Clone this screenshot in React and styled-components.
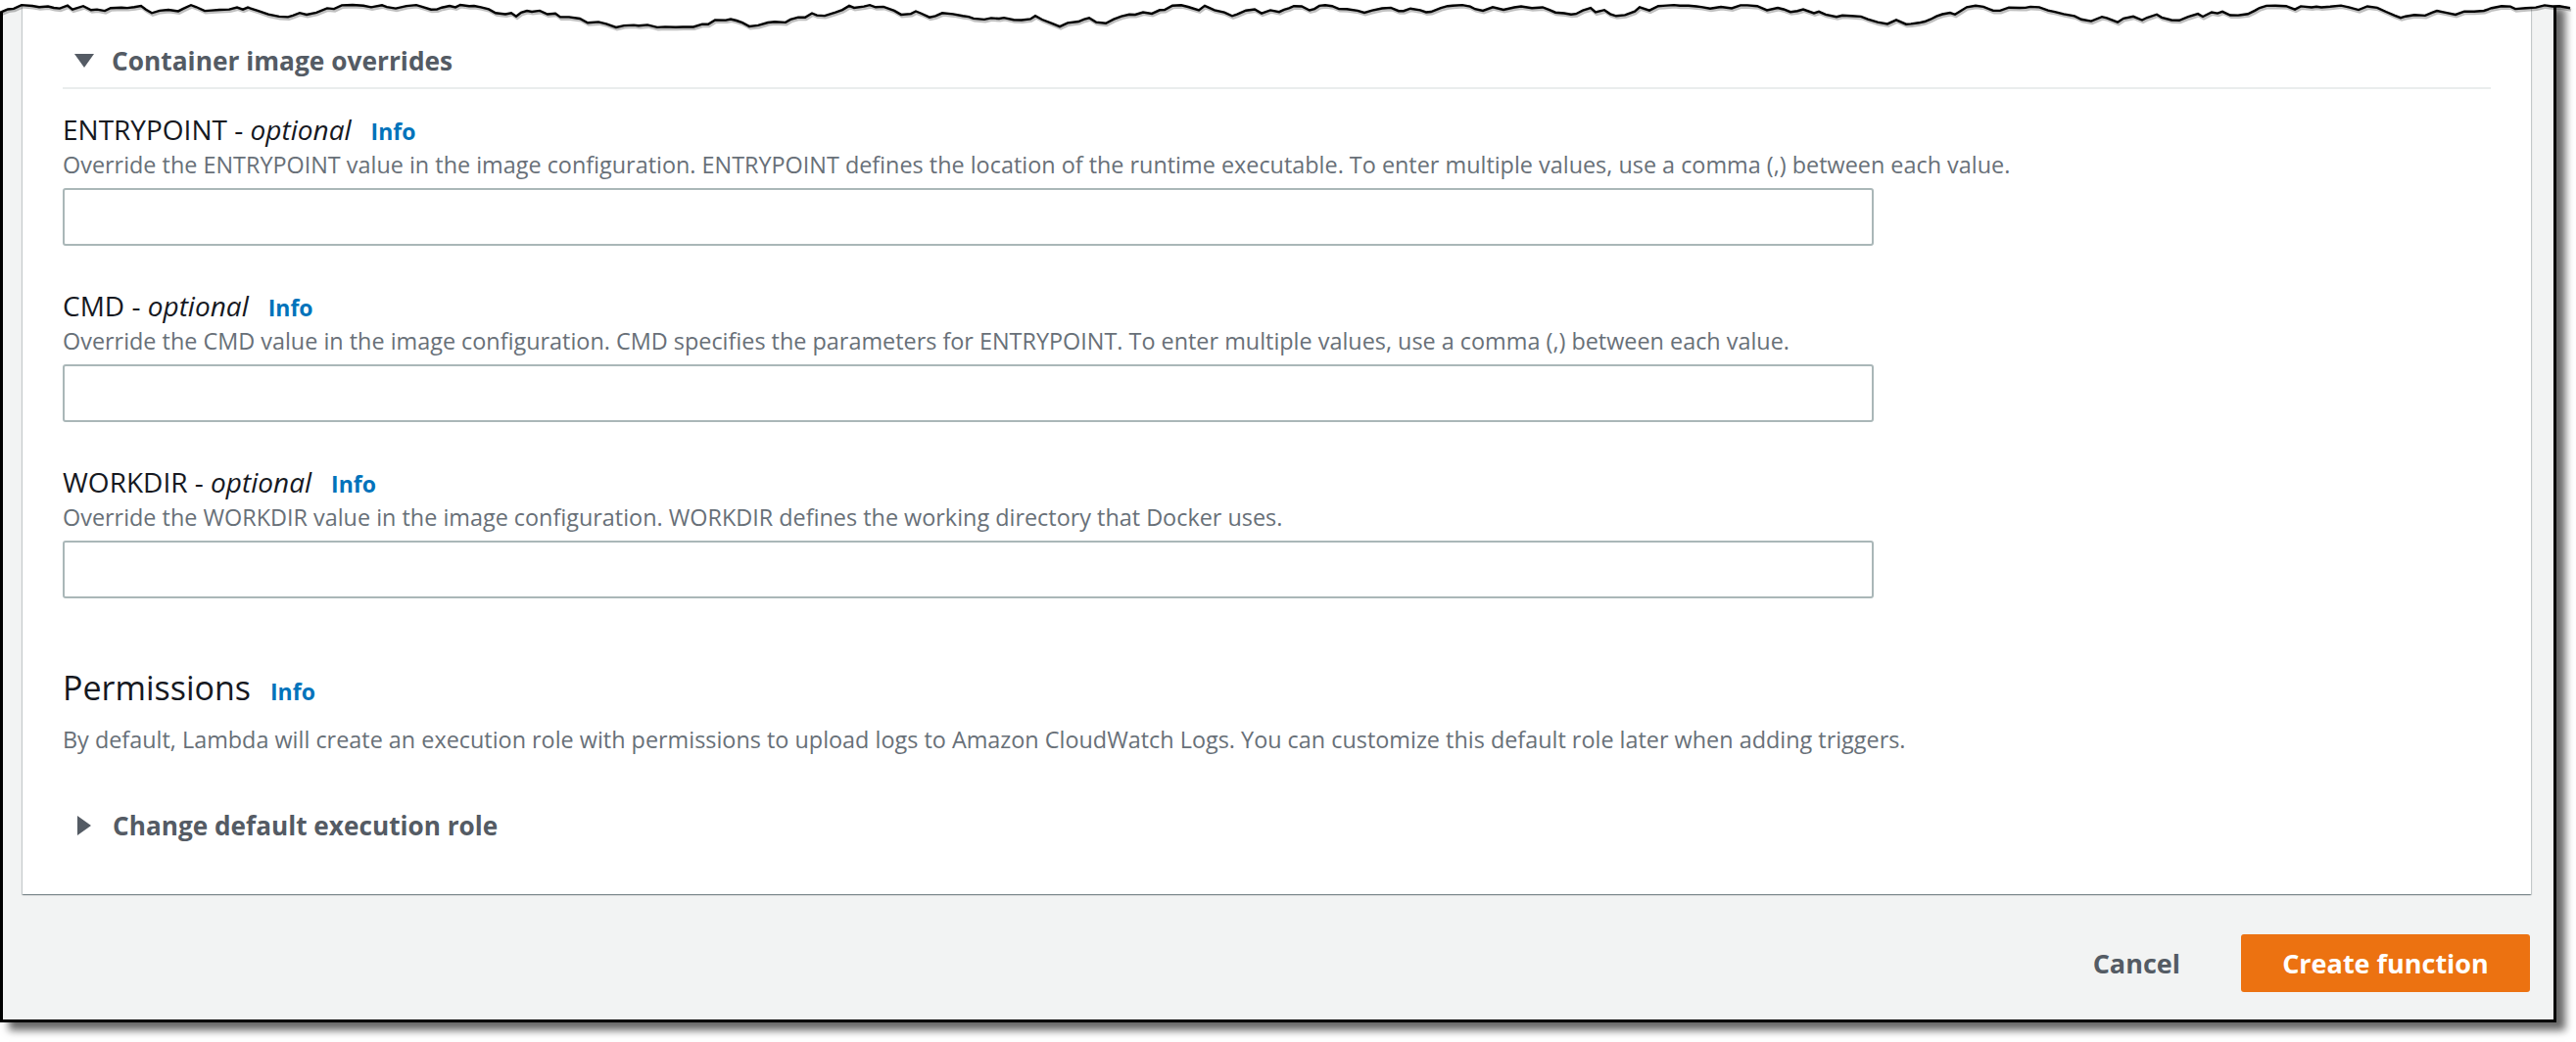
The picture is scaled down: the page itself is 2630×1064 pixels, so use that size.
import styled, { createGlobalStyle } from "styled-components";

const GlobalStyle = createGlobalStyle`
  html, body {
    margin: 0;
    padding: 0;
    background: #fff;
  }
  body {
    font-family: "Open Sans", "Noto Sans", Arial, sans-serif;
    color: #16191f;
  }
`;

// jagged top edge of the cut screenshot
function tearPoints() {
  let seed = 7;
  const rand = () => {
    seed = (seed * 9301 + 49297) % 233280;
    return seed / 233280;
  };
  const pts = [];
  let y = 13;
  for (let x = 0; x <= 2630; x += 5 + Math.floor(rand() * 7)) {
    y += (rand() - 0.5) * 9;
    if (y < 5) y = 5 + rand() * 3;
    if (y > 28) y = 28 - rand() * 3;
    pts.push([x, Math.round(y * 10) / 10]);
  }
  return pts;
}

function Tear() {
  const pts = tearPoints();
  const line = pts.map((p) => p.join(",")).join(" ");
  const last = pts[pts.length - 1];
  const fill = `0,0 ${line} 2630,${last[1]} 2630,0`;
  return (
    <TearSvg width="2630" height="40" viewBox="0 0 2630 40">
      <polygon points={fill} fill="#fff" />
      <polyline points={line} fill="none" stroke="rgba(0,0,0,0.25)" strokeWidth="3" transform="translate(1,2)" />
      <polyline points={line} fill="none" stroke="#000" strokeWidth="2.4" strokeLinejoin="miter" />
    </TearSvg>
  );
}

const CaretDown = () => (
  <svg width="20" height="16" viewBox="0 0 20 16">
    <polygon points="0,1 20,1 10,15" fill="#545b64" />
  </svg>
);

const CaretRight = () => (
  <svg width="16" height="20" viewBox="0 0 16 20">
    <polygon points="1,0 15,10 1,20" fill="#545b64" />
  </svg>
);

const fields = [
  {
    name: "ENTRYPOINT",
    desc: "Override the ENTRYPOINT value in the image configuration. ENTRYPOINT defines the location of the runtime executable. To enter multiple values, use a comma (,) between each value.",
  },
  {
    name: "CMD",
    desc: "Override the CMD value in the image configuration. CMD specifies the parameters for ENTRYPOINT. To enter multiple values, use a comma (,) between each value.",
  },
  {
    name: "WORKDIR",
    desc: "Override the WORKDIR value in the image configuration. WORKDIR defines the working directory that Docker uses.",
  },
];

export default function App() {
  return (
    <Page>
      <GlobalStyle />
      <Frame>
        <Tear />
        <Card>
          <SectionHeader>
            <CaretDown />
            <span>Container image overrides</span>
          </SectionHeader>
          {fields.map((f) => (
            <Field key={f.name}>
              <Label>
                {f.name} - <em>optional</em>
                <Info>Info</Info>
              </Label>
              <Desc>{f.desc}</Desc>
              <Input type="text" />
            </Field>
          ))}
          <Heading>
            Permissions
            <Info>Info</Info>
          </Heading>
          <PermDesc>
            By default, Lambda will create an execution role with permissions to upload logs to Amazon CloudWatch Logs. You can customize this default role later when adding triggers.
          </PermDesc>
          <Expander>
            <CaretRight />
            <span>Change default execution role</span>
          </Expander>
        </Card>
        <Footer>
          <LinkButton>Cancel</LinkButton>
          <PrimaryButton>Create function</PrimaryButton>
        </Footer>
      </Frame>
    </Page>
  );
}

const Page = styled.div`
  width: 2630px;
  height: 1064px;
  background: #fff;
  overflow: hidden;
`;

const Frame = styled.div`
  position: relative;
  box-sizing: border-box;
  width: 2610px;
  height: 1044px;
  border: 3px solid #000;
  border-top: none;
  background: #f2f3f3;
  padding: 0 23px 0 20px;
  box-shadow: 9px 8px 8px rgba(0, 0, 0, 0.6);
  display: flex;
  flex-direction: column;
`;

const TearSvg = styled.svg`
  position: absolute;
  top: 0;
  left: -3px;
  z-index: 2;
`;

const Card = styled.div`
  box-sizing: border-box;
  height: 913px;
  background: #fff;
  padding: 40px 41px 0;
  box-shadow: 0 1px 1px 0 rgba(0, 28, 36, 0.3), 1px 1px 1px 0 rgba(0, 28, 36, 0.15),
    -1px 1px 1px 0 rgba(0, 28, 36, 0.15);
`;

const SectionHeader = styled.div`
  display: flex;
  align-items: center;
  gap: 18px;
  height: 44px;
  padding: 0 0 5px 12px;
  border-bottom: 2px solid #eaeded;
  font-size: 26.3px;
  font-weight: 700;
  color: #545b64;
`;

const Field = styled.div`
  display: flex;
  flex-direction: column;
  margin-top: 23px;
  & + & {
    margin-top: 43px;
  }
`;

const Label = styled.div`
  display: flex;
  align-items: baseline;
  line-height: 36px;
  font-size: 28px;
  color: #16191f;
  white-space: pre;
  em {
    font-style: italic;
  }
`;

const Info = styled.span`
  margin-left: 20px;
  font-size: 23px;
  font-weight: 700;
  color: #0073bb;
`;

const Desc = styled.div`
  line-height: 32px;
  font-size: 23.4px;
  color: #687078;
`;

const Input = styled.input`
  box-sizing: border-box;
  width: 1849px;
  height: 59px;
  margin: 8px 0 0;
  border: 2px solid #aab7b8;
  border-radius: 3px;
  background: #fff;
  outline: none;
`;

const Heading = styled.h2`
  display: flex;
  align-items: baseline;
  margin: 69px 0 0;
  line-height: 44px;
  font-size: 34px;
  font-weight: 400;
  color: #16191f;
`;

const PermDesc = styled.p`
  margin: 11px 0 0;
  line-height: 32px;
  font-size: 23.4px;
  color: #687078;
`;

const Expander = styled.div`
  display: flex;
  align-items: center;
  gap: 21px;
  margin-top: 52px;
  padding-left: 14px;
  height: 40px;
  font-size: 26.2px;
  font-weight: 700;
  color: #545b64;
`;

const Footer = styled.div`
  display: flex;
  justify-content: flex-end;
  align-items: center;
  margin-top: 41px;
  padding-right: 1px;
`;

const LinkButton = styled.button`
  border: none;
  background: none;
  padding: 0 31px;
  margin-right: 31px;
  height: 59px;
  font-family: inherit;
  font-size: 27px;
  font-weight: 700;
  color: #545b64;
`;

const PrimaryButton = styled.button`
  box-sizing: border-box;
  width: 295px;
  height: 59px;
  border: none;
  border-radius: 3px;
  background: #ec7211;
  font-family: inherit;
  font-size: 27px;
  font-weight: 700;
  color: #fff;
`;
